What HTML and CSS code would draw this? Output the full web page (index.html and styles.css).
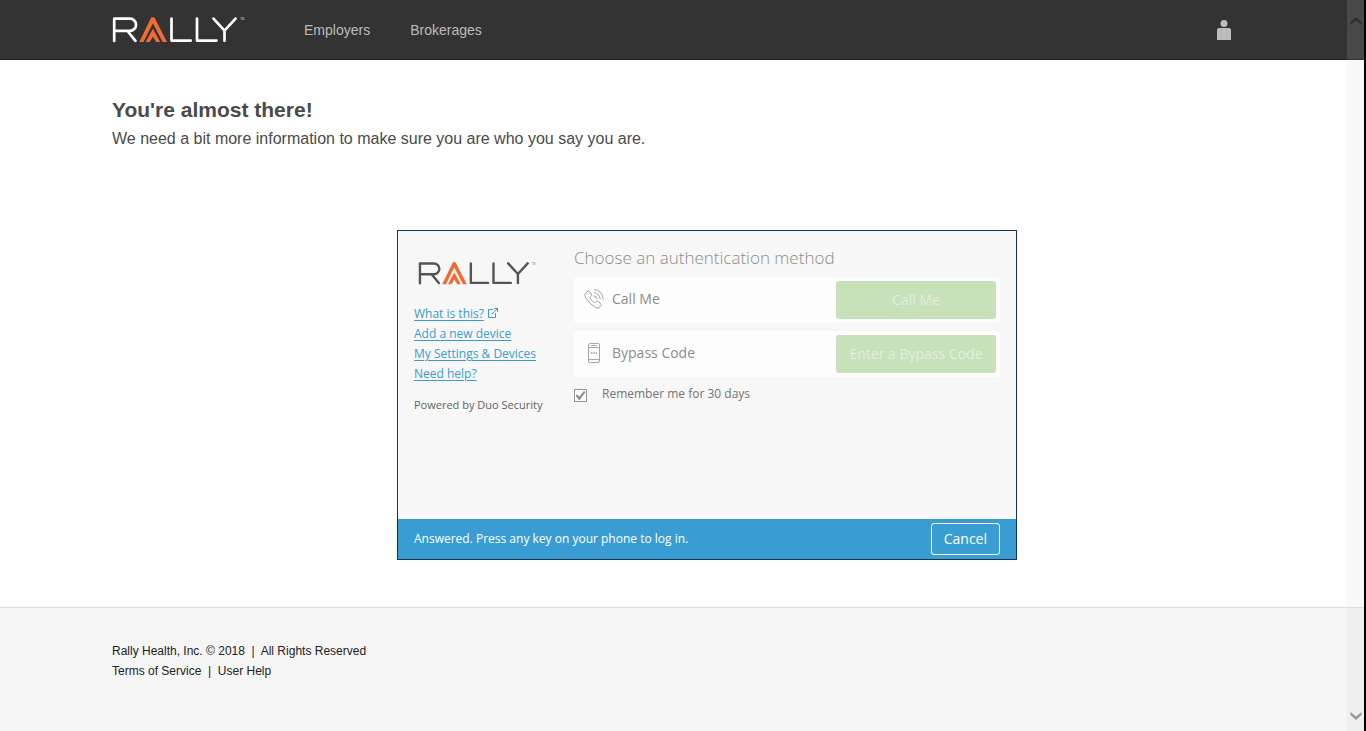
FILE: index.html
```
<!DOCTYPE html>
<html lang="en">
<head>
<meta charset="utf-8">
<meta name="viewport" content="width=device-width, initial-scale=1">
<title>Rally - Verify your identity</title>
<link rel="stylesheet" href="styles.css">
</head>
<body>
<svg class="defs" aria-hidden="true">
  <symbol id="rally-logo" viewBox="0 0 134 28">
    <g fill="none" stroke="currentColor" stroke-width="2.7" stroke-linecap="round" stroke-linejoin="round">
      <path d="M2.2 24.9V2.7H18a6 6 0 0 1 0 12.100H2.200M15.500 15l8 9.800"/>
      <path d="M59.500 2.600v22h19.300M85 2.600v22h19.500"/>
      <path d="M101.500 2.600l11 12 11-12M112.500 14.600v10.200"/>
    </g>
    <g fill="#f26b35">
      <path d="M39.300 1.200h3L55 26h-4.400L40.900 7.300 31.500 26H27.300z"/>
      <path d="M40.900 12.800L48.200 26h-4l-3.300-5.300L37.700 26h-4z"/>
    </g>
    <text class="logo-mark" x="128" y="4" fill="currentColor">TM</text>
  </symbol>
</svg>
<header class="site-header">
  <div class="container header-row">
    <a class="brand" href="#" aria-label="Rally"><svg class="brand-logo" aria-hidden="true"><use href="#rally-logo"/></svg></a>
    <nav class="site-nav">
      <a href="#">Employers</a>
      <a href="#">Brokerages</a>
    </nav>
    <button class="account" type="button" aria-label="Account">
      <svg viewBox="0 0 14 20" width="14" height="20" fill="#bcbcbc" aria-hidden="true"><circle cx="7" cy="3.500" r="3.500"/><path d="M2 8h10q2 0 2 2v10H0V10q0-2 2-2z"/></svg>
    </button>
  </div>
</header>
<main class="page-main">
  <div class="container">
    <h1 class="title">You're almost there!</h1>
    <p class="lead">We need a bit more information to make sure you are who you say you are.</p>
    <div class="prompt-area">
      <section class="prompt">
        <div class="prompt-body">
          <aside class="prompt-side">
            <svg class="side-logo" role="img" aria-label="Rally"><use href="#rally-logo"/></svg>
            <ul class="side-links">
              <li><a href="#">What is this?</a>
                <svg class="external" viewBox="0 0 10 10" width="10" height="10" fill="none" stroke="currentColor" aria-hidden="true"><path d="M5 1.500H.5v8h7V5M6 .5h3.500V4M9.500.5L4 6"/></svg></li>
              <li><a href="#">Add a new device</a></li>
              <li><a href="#">My Settings &amp; Devices</a></li>
              <li><a href="#">Need help?</a></li>
            </ul>
            <p class="powered">Powered by Duo Security</p>
          </aside>
          <form class="methods">
            <h2 class="methods-title">Choose an authentication method</h2>
            <div class="method">
              <svg class="method-icon" viewBox="0 0 20 20" width="20" height="20" fill="none" stroke="#a2a2a2" aria-hidden="true"><path d="M2 3.500L4 2q.8-.5 1.500.3l2 3q.6.900-.2 1.600l-1 .900q-.6.600 0 1.500 1.500 2.200 3.500 4 .8.700 1.500 0l1-.900q.7-.600 1.600 0l3 2.200q.9.700.2 1.600l-1.400 2q-1.300 1.700-4.200.3Q4.500 14.500 1.200 8 0 5.200 2 3.500z"/><path d="M10 .6q8.500.5 9.300 10M9.700 3.700q6 .4 6.500 6.700M9.500 6.800q3.300.2 3.600 3.500"/></svg>
              <span class="method-name">Call Me</span>
              <button class="method-action" type="button" disabled>Call Me</button>
            </div>
            <div class="method">
              <svg class="method-icon" viewBox="0 0 20 20" width="20" height="20" fill="none" stroke="#a6a6a6" aria-hidden="true"><rect x="4.500" y=".5" width="11" height="19" rx="1.500"/><path d="M4.500 4.500h11M4.500 16.500h11M7 2.500h6"/><path d="M7 10h1.500M9.300 10h1.500M11.600 10h1.500" stroke-width="1.500"/></svg>
              <span class="method-name">Bypass Code</span>
              <button class="method-action" type="button" disabled>Enter a Bypass Code</button>
            </div>
            <label class="remember"><input type="checkbox" checked disabled><span>Remember me for 30 days</span></label>
          </form>
        </div>
        <div class="status-bar">
          <p>Answered. Press any key on your phone to log in.</p>
          <button class="cancel" type="button">Cancel</button>
        </div>
      </section>
    </div>
  </div>
</main>
<footer class="site-footer">
  <div class="container">
    <p>Rally Health, Inc. © 2018 &nbsp;|&nbsp; All Rights Reserved</p>
    <p><a href="#">Terms of Service</a> &nbsp;|&nbsp; <a href="#">User Help</a></p>
  </div>
</footer>
<div class="scroll-track" aria-hidden="true">
  <svg viewBox="0 0 12 9" width="12" height="9"><path d="M.5 8V5L6 0l5.500 5v3L6 3.500z" fill="#303030"/></svg>
  <svg viewBox="0 0 12 9" width="12" height="9"><path d="M.5 1v3L6 9l5.500-5V1L6 5.500z" fill="#999"/></svg>
</div>
</body>
</html>
```
FILE: styles.css
```
* { box-sizing: border-box; }

body {
  display: flex;
  flex-direction: column;
  min-height: 100vh;
  margin: 0;
  background: #fff;
  color: #4a4a4a;
  font-family: "Liberation Sans", Arial, sans-serif;
}

h1, h2, p, ul { margin: 0; padding: 0; }
button { font-family: inherit; cursor: pointer; }

.defs { position: absolute; width: 0; height: 0; overflow: visible; }
.logo-mark { font: 3px "Liberation Sans", Arial, sans-serif; opacity: .7; }

.container { padding: 0 132px 0 112px; }

.site-header { background: #333; border-bottom: 1px solid #1e1e1e; }
.header-row { display: flex; align-items: center; height: 59px; }
.brand { display: flex; color: #fff; }
.brand-logo { width: 134px; height: 28px; }
.site-nav { display: flex; gap: 40px; margin-left: 58px; font-size: 14px; line-height: 20px; }
.site-nav a { color: #bcbcbc; text-decoration: none; }
.account { display: flex; margin-left: auto; padding: 0 3px; border: 0; background: none; }

.page-main { padding: 36px 0 47px; }
.title { font-size: 21px; line-height: 28px; }
.lead { font-size: 16px; line-height: 30px; }

.prompt-area { display: flex; justify-content: center; padding: 76px 0 0 68px; }
.prompt {
  display: flex;
  flex-direction: column;
  flex: 0 1 620px;
  min-height: 330px;
  border: 1px solid #12364f;
  background: #f7f7f7;
  font-family: "Open Sans", "Noto Sans", sans-serif;
}
.prompt-body { display: flex; flex: 1; padding: 16px; }
.prompt-side { flex: 0 0 160px; padding-top: 14px; }
.side-logo { display: block; width: 119px; height: 25px; margin-left: 4px; color: #555; }
.side-links { margin-top: 18px; list-style: none; font-size: 12px; line-height: 20px; color: #399bd0; }
.side-links a { color: inherit; text-underline-offset: 2px; }
.external { margin-left: 1px; }
.powered { margin-top: 11px; font-size: 11px; line-height: 20px; color: #626262; }

.methods { flex: 1; min-width: 0; }
.methods-title { margin-bottom: 8px; font-size: 17px; font-weight: 300; line-height: 22px; color: #8c8c8c; }
.method {
  display: flex;
  align-items: center;
  margin-bottom: 8px;
  padding: 4px 4px 4px 10px;
  border-radius: 3px;
  background: #fdfdfd;
}
.method-icon { margin-bottom: 2px; }
.method-name { margin-left: 8px; padding-bottom: 2px; font-size: 14px; line-height: 20px; color: #8c8c8c; }
.method-action {
  width: 160px;
  height: 38px;
  margin-left: auto;
  padding: 0 0 2px;
  border: 0;
  border-radius: 3px;
  background: #c7e1bb;
  color: #e1efdb;
  font-size: 14px;
  cursor: default;
}
.remember { display: flex; gap: 15px; font-size: 12px; line-height: 18px; color: #747474; }
.remember input {
  display: grid;
  place-items: center;
  appearance: none;
  width: 13px;
  height: 13px;
  margin: 4px 0 0;
  border: 1px solid #949494;
  background: #fafafa;
}
.remember input:checked::before {
  content: "";
  width: 10px;
  height: 9px;
  background: #8c8c8c;
  clip-path: polygon(0 50%, 18% 38%, 38% 64%, 84% 0, 100% 10%, 42% 100%, 34% 100%);
}

.status-bar {
  display: flex;
  align-items: center;
  justify-content: space-between;
  padding: 4px 16px;
  background: #399dd4;
  color: #fff;
  font-size: 12px;
}
.status-bar p { padding-bottom: 2px; }
.cancel {
  padding: 0 12px 2px;
  height: 32px;
  border: 1px solid #fff;
  border-radius: 3px;
  background: none;
  color: #fff;
  font-size: 14px;
}

.site-footer {
  flex: 1;
  padding: 33px 0;
  border-top: 1px solid #ddd;
  background: #f5f5f5;
  color: #222;
  font-size: 12px;
  line-height: 20px;
}
.site-footer a { color: inherit; text-decoration: none; }

.scroll-track {
  position: fixed;
  top: 0;
  right: 0;
  bottom: 0;
  display: flex;
  flex-direction: column;
  align-items: center;
  justify-content: space-between;
  width: 19px;
  padding: 17px 0 11px;
  border-right: 2px solid #000;
  background: rgb(208 208 208 / 14%);
}
```
